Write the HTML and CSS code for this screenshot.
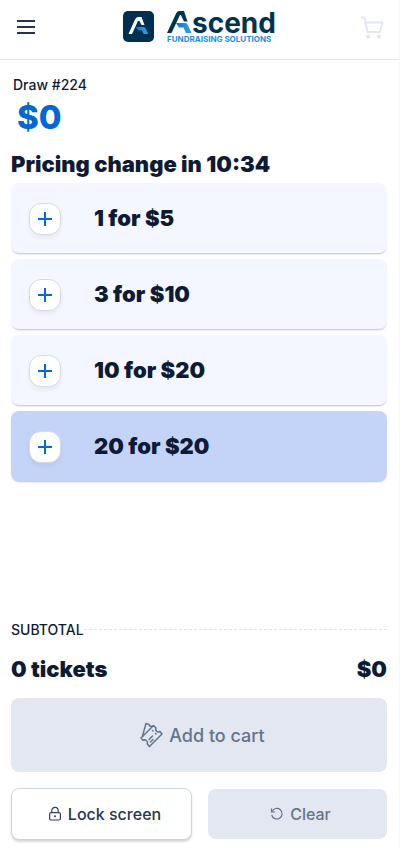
FILE: index.html
```html
<!DOCTYPE html>
<html lang="en">
<head>
<meta charset="utf-8">
<meta name="viewport" content="width=device-width, initial-scale=1">
<title>Ascend Fundraising Solutions</title>
<link rel="stylesheet" href="styles.css">
</head>
<body>
<header class="topbar">
  <button class="icon-button" type="button" aria-label="Menu">
    <svg width="20" height="20" viewBox="0 0 20 20" fill="none" stroke="#26364f" stroke-width="2" stroke-linecap="butt"><path d="M1 4h18M1 10h18M1 16h18"/></svg>
  </button>
  <a class="brand" href="#" aria-label="Ascend Fundraising Solutions">
    <svg width="154" height="36" viewBox="0 0 154 36">
      <defs>
        <linearGradient id="fold" x1="0" y1="0" x2="1" y2="0"><stop offset="0" stop-color="#1372c4"/><stop offset="1" stop-color="#2aa5f4"/></linearGradient>
      </defs>
      <rect x="0" y="2" width="31" height="31" rx="5" fill="#002f4f"/>
      <path d="M5.500 25L12 10.500Q13 8 15 8H18.500L16.500 12H15L9 25Z" fill="#fff"/>
      <path d="M16 8H18.500L21.500 16H18.500L16 11Z" fill="#fff"/>
      <path d="M13 18H20.500Q21.900 18 22.500 19.300L25.200 25H20.600L18.800 21.200H15Z" fill="url(#fold)"/>
      <path d="M44 24L53.200 4.200Q54.200 2 56.500 2H61L58.800 6H57L48.500 24Z" fill="#003350"/>
      <path d="M57.500 2H61L64.500 12.500H61L57.300 5Z" fill="#003350"/>
      <path d="M53 14H62.500Q64 14 64.700 15.700L68.500 24H63L60.500 18.500H56Z" fill="url(#fold)"/>
      <text class="brand-name" x="69" y="24">scend</text>
      <text class="brand-tag" x="44" y="33">FUNDRAISING SOLUTIONS</text>
    </svg>
  </a>
  <button class="icon-button cart" type="button" aria-label="Cart" disabled>
    <svg width="24" height="24" viewBox="0 0 24 24" fill="none" stroke="#e2e7f1" stroke-width="2" stroke-linejoin="round"><path d="M1 2.500H4.500L7.500 17H20L22.500 7.500H5.500"/><circle cx="8" cy="21.500" r="2" fill="#e2e7f1" stroke="none"/><circle cx="19" cy="21.500" r="2" fill="#e2e7f1" stroke="none"/></svg>
  </button>
</header>
<main class="page">
  <section class="draw">
    <p class="draw-name">Draw #224</p>
    <p class="jackpot">$0</p>
  </section>
  <h1 class="title">Pricing change in 10:34</h1>
  <ul class="prices">
    <li class="price"><button class="add" type="button" aria-label="Add 1 for $5"><svg width="16" height="16" viewBox="0 0 16 16"><path d="M8 1v14M1 8h14"/></svg></button><span>1 for $5</span></li>
    <li class="price"><button class="add" type="button" aria-label="Add 3 for $10"><svg width="16" height="16" viewBox="0 0 16 16"><path d="M8 1v14M1 8h14"/></svg></button><span>3 for $10</span></li>
    <li class="price"><button class="add" type="button" aria-label="Add 10 for $20"><svg width="16" height="16" viewBox="0 0 16 16"><path d="M8 1v14M1 8h14"/></svg></button><span>10 for $20</span></li>
    <li class="price selected"><button class="add" type="button" aria-label="Add 20 for $20"><svg width="16" height="16" viewBox="0 0 16 16"><path d="M8 1v14M1 8h14"/></svg></button><span>20 for $20</span></li>
  </ul>
  <section class="summary">
    <div class="subtotal"><span>SUBTOTAL</span><svg class="rule" height="2"><path d="M0 .5H2000"/></svg></div>
    <div class="totals"><span>0 tickets</span><span>$0</span></div>
    <button class="button muted checkout" type="button" disabled>
      <svg width="24" height="26" viewBox="0 0 24 26" fill="none" stroke="#64748b" stroke-width="1.500" stroke-linejoin="round" stroke-linecap="round"><path d="M14.500 3.500L17 6Q16 8 17.700 9.300Q19.300 10.500 21 9.500L23 12L10.500 24.500L8.300 22Q9 20 7.500 18.700Q6 17.300 4 18.300L2 16Z"/><path d="M3.500 14L7 1.500L10 2.500Q10.500 4.500 12.500 4.500L14 4"/><path d="M13.500 8.500L14 9M16.500 11.500L17 12M10 17.500L13.500 14M11.500 20L14 17.500"/></svg>
      Add to cart
    </button>
    <div class="actions">
      <button class="button outline" type="button">
        <svg width="14" height="16" viewBox="0 0 14 16" fill="none" stroke="#334155" stroke-width="1.200"><rect x="1.600" y="6.600" width="10.800" height="7.400" rx="1.500"/><path d="M3.800 6.500V4.500A3.200 3.200 0 0 1 10.200 4.500V6.500"/><circle cx="7" cy="10.200" r="1" fill="#334155" stroke="none"/></svg>
        Lock screen
      </button>
      <button class="button muted" type="button" disabled>
        <svg width="14" height="14" viewBox="0 0 14 14" fill="none" stroke="#64748b" stroke-width="1.200"><path d="M1.500 1.500V5H5"/><path d="M2 4.500A5.300 5.300 0 1 1 1.700 8"/></svg>
        Clear
      </button>
    </div>
  </section>
</main>
</body>
</html>
```
FILE: styles.css
```css
* {
  box-sizing: border-box;
}

body {
  display: flex;
  flex-direction: column;
  min-height: 100vh;
  margin: 0;
  border-right: 1px solid #f8f8fb;
  background: #fff;
  color: #0f1b35;
  font-family: Inter, "Liberation Sans", sans-serif;
}

svg {
  display: block;
  flex: none;
  overflow: visible;
}

p, h1, ul {
  margin: 0;
  padding: 0;
}

button {
  font: inherit;
}

.topbar {
  display: grid;
  grid-template-columns: 1fr auto 1fr;
  align-items: center;
  height: 60px;
  padding: 0 15px 6px 16px;
  border-bottom: 1px solid #e2e4ef;
}

.icon-button {
  justify-self: start;
  padding: 0;
  border: 0;
  background: none;
}

.cart {
  justify-self: end;
}

.brand-name {
  fill: #003350;
  font-family: Inter, sans-serif;
  font-size: 28px;
  font-weight: 700;
}

.brand-tag {
  fill: #1b8fe0;
  font-family: Inter, sans-serif;
  font-size: 8px;
  font-weight: 700;
}

.page {
  display: flex;
  flex: 1;
  flex-direction: column;
  padding: 15px 12px 9px 11px;
}

.draw {
  padding-left: 2px;
}

.draw-name {
  font-size: 14px;
  font-weight: 500;
  line-height: 20px;
}

.jackpot {
  padding-left: 4px;
  color: #0069d2;
  font-size: 33px;
  font-weight: 800;
  line-height: 44px;
}

.title {
  margin-top: 9px;
  font-size: 22px;
  font-weight: 900;
  line-height: 32px;
}

.prices {
  display: grid;
  gap: 6px;
  margin-top: 3px;
  list-style: none;
}

.price {
  display: flex;
  align-items: center;
  gap: 33px;
  height: 70px;
  padding: 0 18px;
  border-radius: 8px;
  background: #f4f7ff;
  box-shadow: 0 2px 2px -1px rgba(0, 0, 0, .25);
  font-size: 22px;
  font-weight: 900;
}

.selected {
  background: #c4d3f8;
}

.add {
  display: grid;
  place-items: center;
  width: 32px;
  height: 32px;
  margin-top: 2px;
  padding: 0;
  border: 1px solid #d7dae1;
  border-radius: 12px;
  background: #fff;
  box-shadow: 0 3px 4px rgba(15, 27, 53, .06);
}

.add path {
  fill: none;
  stroke: #0069d2;
  stroke-width: 2;
}

.summary {
  margin-top: auto;
}

.subtotal {
  display: flex;
  align-items: center;
  font-size: 14px;
  font-weight: 500;
  line-height: 20px;
}

.rule {
  flex: 1;
  min-width: 0;
  overflow: hidden;
}

.rule path {
  stroke: #e2e4e8;
  stroke-dasharray: 3 2;
}

.totals {
  display: flex;
  justify-content: space-between;
  margin: 13px 0;
  font-size: 22px;
  font-weight: 900;
  line-height: 32px;
}

.button {
  display: flex;
  align-items: center;
  justify-content: center;
  gap: 6px;
  height: 50px;
  padding: 0 0 0 6px;
  border: 0;
  border-radius: 8px;
  font-size: 16px;
}

.muted {
  background: #e2e7f1;
  color: #64748b;
  font-weight: 500;
}

.checkout {
  width: 100%;
  height: 74px;
  font-size: 18px;
}

.actions {
  display: grid;
  grid-template-columns: 181fr 179fr;
  align-items: center;
  gap: 16px;
  margin-top: 16px;
}

.outline {
  height: 52px;
  border: 1px solid #cbd5e1;
  background: #fff;
  box-shadow: 0 2px 2px rgba(0, 0, 0, .15);
  color: #26364f;
  font-weight: 500;
}
```
